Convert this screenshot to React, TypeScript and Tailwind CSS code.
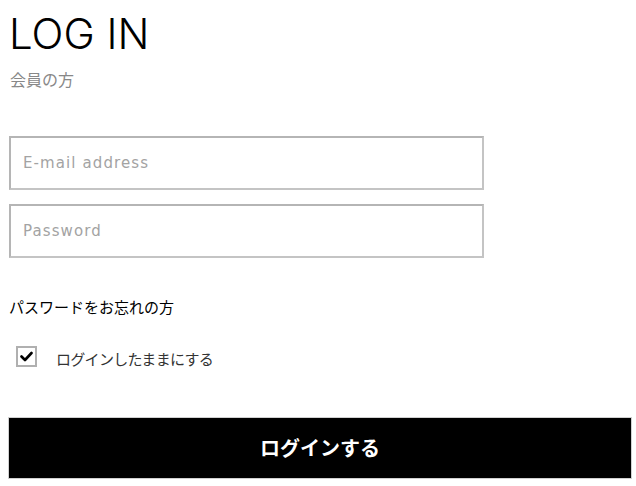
import React from "react";

export default function App() {
  const jp = "font-['Noto_Sans_CJK_JP','Noto_Sans',sans-serif]";
  return (
    <div className="w-[636px] h-[486px] bg-white overflow-hidden pl-[8px] pr-[4px] pt-[9px]">
      <h1 className="font-['Inter',sans-serif] font-light text-[42px] leading-[50px] text-black ml-[1px]">
        LOG IN
      </h1>
      <p className={`${jp} text-[16px] leading-[24px] text-[#888] ml-[2px] mt-[8px]`}>会員の方</p>

      <div className="mt-[45px] flex flex-col gap-[14px] w-[475px] ml-[1px]">
        <div className="h-[54px] border-2 border-[#c4c4c4] border-t-[#b5b5b5] border-l-[#b5b5b5] flex items-center px-[12px]">
          <span className="font-['DejaVu_Sans',sans-serif] text-[15px] tracking-[1.1px] text-[#a3a3a3]">
            E-mail address
          </span>
        </div>
        <div className="h-[54px] border-2 border-[#c4c4c4] border-t-[#b5b5b5] border-l-[#b5b5b5] flex items-center px-[12px]">
          <span className="font-['DejaVu_Sans',sans-serif] text-[15px] tracking-[1.1px] text-[#a3a3a3]">
            Password
          </span>
        </div>
      </div>

      <p className={`${jp} text-[15px] leading-[24px] text-black mt-[37px] ml-[1px]`}>
        パスワードをお忘れの方
      </p>

      <div className="flex items-center mt-[23px] ml-[8px]">
        <div className="w-[21px] h-[21px] border-2 border-[#b0b0b0] flex items-center justify-center bg-white">
          <svg width="13" height="11" viewBox="0 0 13 11">
            <path d="M1.5 5.5 L5 9 L11.5 2" fill="none" stroke="#000" strokeWidth="2.6" strokeLinecap="round" strokeLinejoin="round" />
          </svg>
        </div>
        <span className={`${jp} text-[15px] leading-[24px] text-[#333] ml-[19px] mt-[5px] tracking-[-0.7px]`}>
          ログインしたままにする
        </span>
      </div>

      <button className={`${jp} mt-[46px] w-[624px] h-[62px] bg-black border border-[#d0d0d0] text-white font-bold text-[20px] flex items-center justify-center`}>
        ログインする
      </button>
    </div>
  );
}
